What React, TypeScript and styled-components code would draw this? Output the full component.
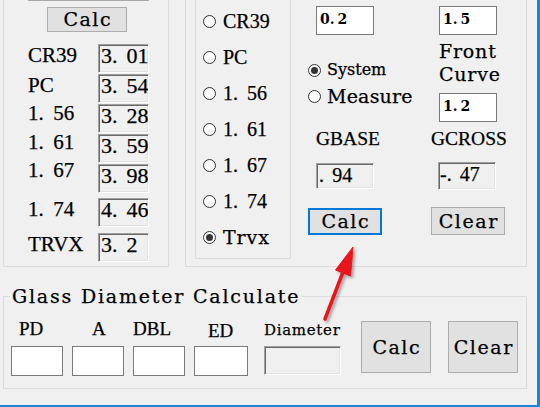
import React from "react";
import styled, { createGlobalStyle, css } from "styled-components";

const SERIF = `"Liberation Serif", "Times New Roman", serif`;
const SLAB = `"DejaVu Serif", "Liberation Serif", serif`;

const GlobalStyle = createGlobalStyle`
  html, body {
    margin: 0;
    padding: 0;
    background: #f0f0f0;
  }
  body {
    font-family: ${SERIF};
    color: #000;
    -webkit-text-stroke: 0.25px #000;
  }
`;

type PlaceProps = { $top?: number; $indent?: number };

const place = css<PlaceProps>`
  margin-top: ${(p) => p.$top ?? 0}px;
  margin-left: ${(p) => p.$indent ?? 0}px;
`;

const sunken = css`
  border-top: 1px solid #a0a0a0;
  border-left: 1px solid #a0a0a0;
  border-bottom: 1px solid #ffffff;
  border-right: 1px solid #ffffff;
  box-shadow: inset 1px 1px 0 #696969, inset -1px -1px 0 #e3e3e3;
  background: #f0f0f0;
`;

const Window = styled.div`
  position: relative;
  width: 540px;
  height: 407px;
  box-sizing: border-box;
  padding-left: 3px;
  background: #f0f0f0;
  border-right: 3px solid #1883d7;
  border-bottom: 2px solid #1883d7;
  overflow: hidden;
`;

const TopRow = styled.div`
  display: flex;
  height: 267px;
`;

const Group = styled.div`
  box-sizing: border-box;
  border: 1px solid #dcdcdc;
  border-top: none;
`;

const LensGroup = styled(Group)`
  width: 166px;
  display: flex;
  flex-direction: column;
  align-items: flex-start;
`;

const CutEdge = styled.div`
  margin-left: 24px;
  width: 121px;
  height: 1px;
  background: #a8a8a8;
`;

const Button = styled.button<
  PlaceProps & { $w: number; $h: number; $focused?: boolean; $size?: number; $ls?: number }
>`
  ${place};
  width: ${(p) => p.$w}px;
  height: ${(p) => p.$h}px;
  box-sizing: border-box;
  padding: 0 0 0 ${(p) => p.$ls ?? 0}px;
  background: #e1e1e1;
  border: ${(p) => (p.$focused ? "2px solid #0078d7" : "1px solid #adadad")};
  color: #000;
  font-family: ${SLAB};
  font-size: ${(p) => p.$size ?? 19}px;
  letter-spacing: ${(p) => p.$ls ?? 0}px;
  line-height: 1;
  flex-shrink: 0;
  -webkit-text-stroke: 0.25px #000;
`;

const ValueRow = styled.div<{ $gap: number }>`
  display: flex;
  align-items: flex-start;
  padding-left: 24px;
  margin-top: ${(p) => p.$gap}px;
`;

const RowLabel = styled.div<{ $shift: number }>`
  width: 70px;
  font-family: ${SERIF};
  font-size: 21px;
  line-height: 28px;
  margin-top: ${(p) => p.$shift}px;
  white-space: nowrap;
`;

const ReadBox = styled.div<PlaceProps & { $w: number; $h: number; $size?: number; $pad?: number }>`
  ${place};
  ${sunken};
  width: ${(p) => p.$w}px;
  height: ${(p) => p.$h}px;
  box-sizing: border-box;
  padding-left: ${(p) => p.$pad ?? 2}px;
  font-family: ${SERIF};
  font-size: ${(p) => p.$size ?? 22}px;
  line-height: 22px;
  white-space: nowrap;
  overflow: hidden;
`;

const EntryBox = styled.div<PlaceProps & { $w: number; $h: number }>`
  ${place};
  width: ${(p) => p.$w}px;
  height: ${(p) => p.$h}px;
  box-sizing: border-box;
  background: #fff;
  border: 1px solid #7a7a7a;
  padding-left: 3px;
  font-family: ${SLAB};
  font-weight: bold;
  font-size: 14px;
  line-height: 24px;
  white-space: nowrap;
  -webkit-text-stroke: 0;
`;

const OptionsGroup = styled(Group)`
  margin-left: 16px;
  width: 342px;
  display: flex;
  align-items: flex-start;
`;

const RadioGroup = styled(Group)`
  margin-left: 9px;
  width: 96px;
  height: 259px;
  display: flex;
  flex-direction: column;
  gap: 16px;
  padding: 11px 0 0 7px;
`;

const RadioItem = styled.div<PlaceProps & { $gap: number }>`
  ${place};
  display: flex;
  align-items: center;
  height: 20px;
  gap: ${(p) => p.$gap}px;
  white-space: nowrap;
`;

const RadioDot = styled.span<{ $checked?: boolean }>`
  position: relative;
  width: 13px;
  height: 13px;
  box-sizing: border-box;
  border-radius: 50%;
  border: 1px solid #333;
  background: #fff;
  flex-shrink: 0;

  &::after {
    content: "";
    display: ${(p) => (p.$checked ? "block" : "none")};
    position: absolute;
    left: 2px;
    top: 2px;
    width: 7px;
    height: 7px;
    border-radius: 50%;
    background: #333;
  }
`;

const RadioText = styled.span<{ $slab?: boolean; $size: number; $ls?: number }>`
  font-family: ${(p) => (p.$slab ? SLAB : SERIF)};
  font-size: ${(p) => p.$size}px;
  letter-spacing: ${(p) => p.$ls ?? 0}px;
  line-height: 20px;
`;

const Column = styled.div<{ $lead: number; $w: number }>`
  margin-left: ${(p) => p.$lead}px;
  width: ${(p) => p.$w}px;
  display: flex;
  flex-direction: column;
  align-items: flex-start;
`;

const Caption = styled.div<PlaceProps & { $slab?: boolean; $size: number; $lh: number; $ls?: number }>`
  ${place};
  font-family: ${(p) => (p.$slab ? SLAB : SERIF)};
  font-size: ${(p) => p.$size}px;
  line-height: ${(p) => p.$lh}px;
  letter-spacing: ${(p) => p.$ls ?? 0}px;
  white-space: nowrap;
`;

const GlassGroup = styled.fieldset`
  margin: 19px 0 0 0;
  padding: 13px 0 0 0;
  width: 524px;
  height: 103px;
  box-sizing: border-box;
  border: 1px solid #dcdcdc;
  min-inline-size: 0;
`;

const GroupTitle = styled.legend`
  margin-left: 6px;
  padding: 0 2px;
  font-family: ${SLAB};
  font-size: 19px;
  letter-spacing: 1.8px;
  line-height: 20px;
`;

const FieldRow = styled.div`
  display: flex;
  align-items: flex-start;
  padding-left: 7px;
`;

const Field = styled.div<{ $lead: number }>`
  display: flex;
  flex-direction: column;
  align-items: flex-start;
  margin-left: ${(p) => p.$lead}px;
`;

const FieldLabel = styled.div<{ $indent: number; $drop: number; $slab?: boolean }>`
  height: 20px;
  box-sizing: border-box;
  padding-top: ${(p) => p.$drop}px;
  margin-left: ${(p) => p.$indent}px;
  font-family: ${(p) => (p.$slab ? SLAB : SERIF)};
  font-size: ${(p) => (p.$slab ? 15 : 19)}px;
  letter-spacing: ${(p) => (p.$slab ? 0.7 : 0)}px;
  line-height: 20px;
  white-space: nowrap;
`;

const FieldInput = styled.div<{ $w: number }>`
  margin-top: 7px;
  width: ${(p) => p.$w}px;
  height: 30px;
  box-sizing: border-box;
  background: #fff;
  border: 1px solid #7a7a7a;
`;

const Dot = styled.span<{ $w: number }>`
  display: inline-block;
  width: ${(p) => p.$w}em;
`;

const Arrow = styled.svg`
  position: absolute;
  left: 0;
  top: 0;
  pointer-events: none;
`;

const Num = ({ text, w = 0.66 }: { text: string; w?: number }) => {
  const parts = text.split(".");
  return (
    <>
      {parts.map((part, i) => (
        <React.Fragment key={i}>
          {i > 0 && <Dot $w={w}>.</Dot>}
          {part}
        </React.Fragment>
      ))}
    </>
  );
};

const lensValues = [
  { name: "CR39", value: "3.01", shift: -3, gap: 12 },
  { name: "PC", value: "3.54", shift: -3, gap: 1 },
  { name: "1.56", value: "3.28", shift: -5, gap: 1 },
  { name: "1.61", value: "3.59", shift: -6, gap: 1 },
  { name: "1.67", value: "3.98", shift: -8, gap: 1 },
  { name: "1.74", value: "4.46", shift: -3, gap: 5 },
  { name: "TRVX", value: "3.2", shift: -3, gap: 6 },
];

const materials = ["CR39", "PC", "1.56", "1.61", "1.67", "1.74", "Trvx"];

const fields = [
  { name: "PD", lead: 0, indent: 8, drop: 0, w: 52 },
  { name: "A", lead: 9, indent: 20, drop: 0, w: 52 },
  { name: "DBL", lead: 9, indent: 0, drop: 0, w: 52 },
  { name: "ED", lead: 9, indent: 14, drop: 2, w: 54 },
];

export default function App() {
  const selected = "Trvx";
  return (
    <>
      <GlobalStyle />
      <Window>
        <TopRow>
          <LensGroup>
            <CutEdge />
            <Button $top={6} $indent={43} $w={80} $h={25} $ls={1.5}>
              Calc
            </Button>
            {lensValues.map((row) => (
              <ValueRow key={row.name} $gap={row.gap}>
                <RowLabel $shift={row.shift}>
                  <Num text={row.name} w={0.7} />
                </RowLabel>
                <ReadBox $w={51} $h={29}>
                  <Num text={row.value} />
                </ReadBox>
              </ValueRow>
            ))}
          </LensGroup>

          <OptionsGroup>
            <RadioGroup>
              {materials.map((m) => {
                const slab = m === "Trvx";
                return (
                  <RadioItem key={m} $gap={7}>
                    <RadioDot $checked={m === selected} />
                    <RadioText $slab={slab} $size={slab ? 19 : 20} $ls={slab ? 0.9 : 0}>
                      <Num text={m} w={0.7} />
                    </RadioText>
                  </RadioItem>
                );
              })}
            </RadioGroup>

            <Column $lead={17} $w={123}>
              <EntryBox $top={6} $indent={8} $w={58} $h={29}>
                <Num text="0.2" w={0.55} />
              </EntryBox>
              <RadioItem $top={25} $gap={6}>
                <RadioDot $checked />
                <RadioText $slab $size={16}>
                  System
                </RadioText>
              </RadioItem>
              <RadioItem $top={6} $gap={6}>
                <RadioDot />
                <RadioText $slab $size={19} $ls={0.2}>
                  Measure
                </RadioText>
              </RadioItem>
              <Caption $top={23} $indent={8} $size={19.5} $lh={20}>
                GBASE
              </Caption>
              <ReadBox $top={14} $indent={8} $w={58} $h={26} $size={20}>
                <Num text=".94" />
              </ReadBox>
              <Button $top={19} $w={74} $h={27} $focused $ls={1.5}>
                Calc
              </Button>
            </Column>

            <Column $lead={0} $w={90}>
              <EntryBox $top={6} $indent={8} $w={58} $h={29}>
                <Num text="1.5" w={0.55} />
              </EntryBox>
              <Caption $top={5} $indent={8} $slab $size={19} $lh={23} $ls={0.8}>
                Front
                <br />
                Curve
              </Caption>
              <EntryBox $top={7} $indent={8} $w={58} $h={29}>
                <Num text="1.2" w={0.55} />
              </EntryBox>
              <Caption $top={7} $size={19.5} $lh={20}>
                GCROSS
              </Caption>
              <ReadBox $top={13} $indent={7} $w={58} $h={28} $size={20} $pad={1}>
                <Num text="-.47" />
              </ReadBox>
              <Button $top={17} $w={74} $h={28} $ls={1.6}>
                Clear
              </Button>
            </Column>
          </OptionsGroup>
        </TopRow>

        <GlassGroup>
          <GroupTitle>Glass Diameter Calculate</GroupTitle>
          <FieldRow>
            {fields.map((f) => (
              <Field key={f.name} $lead={f.lead}>
                <FieldLabel $indent={f.indent} $drop={f.drop}>
                  {f.name}
                </FieldLabel>
                <FieldInput $w={f.w} />
              </Field>
            ))}
            <Field $lead={16}>
              <FieldLabel $indent={0} $drop={1} $slab>
                Diameter
              </FieldLabel>
              <ReadBox $top={7} $w={77} $h={29} />
            </Field>
            <Button $top={2} $indent={20} $w={70} $h={52} $ls={1.5}>
              Calc
            </Button>
            <Button $top={2} $indent={17} $w={70} $h={52} $ls={1.6}>
              Clear
            </Button>
          </FieldRow>
        </GlassGroup>

        <Arrow width={540} height={407} viewBox="0 0 540 407">
          <defs>
            <filter id="arrowShadow" x="-50%" y="-50%" width="200%" height="200%">
              <feDropShadow dx="2" dy="2" stdDeviation="1.5" floodColor="#000" floodOpacity="0.35" />
            </filter>
          </defs>
          <g filter="url(#arrowShadow)" fill="#e8161c" stroke="#e8161c" strokeLinejoin="round">
            <line x1={325} y1={319} x2={343} y2={272} strokeWidth={3.5} strokeLinecap="round" />
            <polygon points="353,247 350.5,276 335.5,270" strokeWidth={1} />
          </g>
        </Arrow>
      </Window>
    </>
  );
}
